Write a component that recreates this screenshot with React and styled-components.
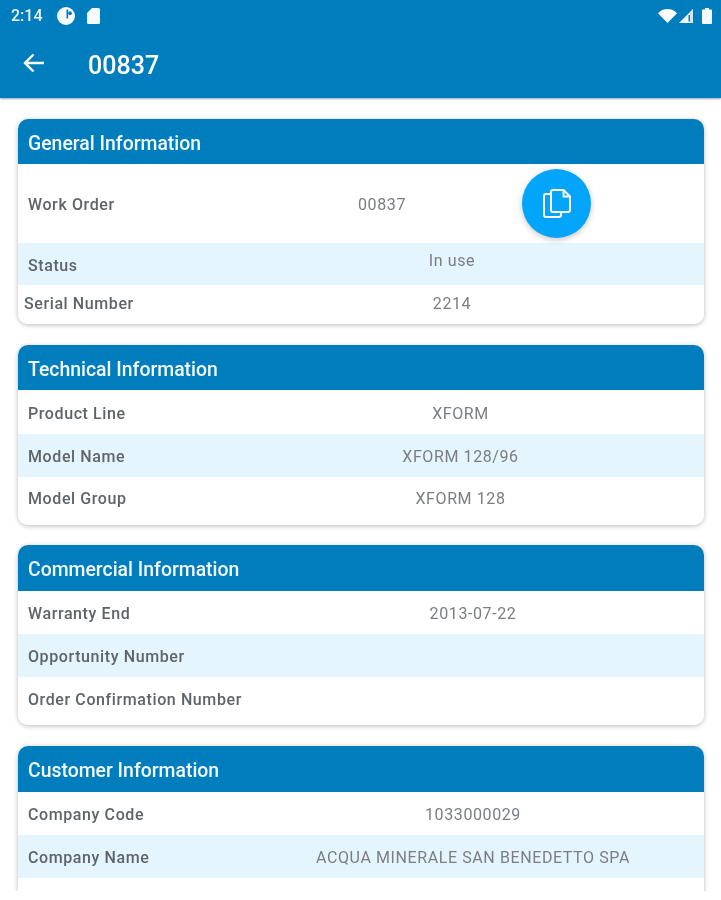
import React from "react";
import styled, { createGlobalStyle } from "styled-components";

const Global = createGlobalStyle`
  html, body { margin: 0; padding: 0; background: #fff; }
  body { font-family: Roboto, "Liberation Sans", sans-serif; }
`;

const Screen = styled.div`
  width: 721px;
  height: 891px;
  overflow: hidden;
  background: #fff;
  filter: blur(0.35px);
`;

const AppBar = styled.header`
  height: 98px;
  background: #007dbd;
  color: #fff;
  box-shadow: 0 1px 2px rgba(0, 60, 110, 0.45);
  position: relative;
  display: flex;
  flex-direction: column;
`;

const StatusBar = styled.div`
  height: 31px;
  padding: 0 9px 0 11px;
  display: flex;
  align-items: center;
  gap: 12px;
`;

const Time = styled.span`
  font-size: 16px;
  font-weight: 500;
  color: #eef6fb;
  margin-right: 2px;
`;

const StatusRight = styled.div`
  margin-left: auto;
  display: flex;
  align-items: center;
  gap: 2px;
`;

const BatterySlot = styled.span`
  display: flex;
  margin-left: 7px;
`;

const TitleRow = styled.div`
  flex: 1;
  display: flex;
  align-items: center;
  padding: 0 0 4px 22px;
  gap: 42px;
`;

const Title = styled.h1`
  margin: 6px 0 0;
  font-size: 25px;
  font-weight: 500;
  line-height: 1;
  letter-spacing: 0.05px;
`;

const Content = styled.main`
  padding: 21px 17px 0 18px;
  display: flex;
  flex-direction: column;
  gap: 20.6px;
`;

const Card = styled.section`
  border-radius: 10px;
  background: #fff;
  box-shadow: 0 1px 5px rgba(0, 0, 0, 0.28);
  overflow: hidden;
  flex-shrink: 0;
`;

const CardHead = styled.h2`
  margin: 0;
  height: ${(p) => p.$h}px;
  padding: ${(p) => p.$pt}px 10px 0;
  box-sizing: border-box;
  display: flex;
  align-items: center;
  background: #007dbd;
  color: #f2f9fd;
  font-size: 19.4px;
  font-weight: 500;
`;

const Row = styled.div`
  position: relative;
  display: flex;
  align-items: center;
  box-sizing: border-box;
  height: ${(p) => p.$h}px;
  padding-top: ${(p) => p.$pt ?? 2}px;
  padding-bottom: ${(p) => p.$pb ?? 0}px;
  background: ${(p) => (p.$striped ? "#e5f5fe" : "#fff")};
`;

const Label = styled.div`
  width: ${(p) => p.$w}px;
  flex-shrink: 0;
  padding-left: ${(p) => p.$pad ?? 10}px;
  box-sizing: border-box;
  font-size: 16px;
  font-weight: 500;
  letter-spacing: 0.6px;
  color: #5e6468;
  white-space: nowrap;
`;

const Value = styled.div`
  flex: 1;
  text-align: center;
  font-size: 16px;
  letter-spacing: 0.6px;
  color: #7a7e82;
  padding-right: ${(p) => p.$pr ?? 0}px;
  margin-top: ${(p) => p.$up ?? 0}px;
`;

const Fab = styled.button`
  position: absolute;
  left: 504px;
  top: 5px;
  width: 69px;
  height: 69px;
  padding: 0;
  border: 0;
  border-radius: 50%;
  background: #03a5fb;
  box-shadow: 0 2px 6px rgba(0, 0, 0, 0.22);
  display: flex;
  align-items: center;
  justify-content: center;
  z-index: 1;
`;

const BackArrow = () => (
  <svg width="24" height="24" viewBox="0 0 24 24" fill="none" stroke="#fff" strokeWidth="2.4">
    <path d="M22 12H3M11.500 3.500L3 12l8.500 8.500" />
  </svg>
);

const DataUsage = () => (
  <svg width="18" height="18" viewBox="0 0 18 18">
    <circle cx="9" cy="9" r="9" fill="#f4fafd" />
    <rect x="9.500" y="2.500" width="1.600" height="9" fill="#007dbd" />
    <circle cx="13" cy="6.200" r="1.900" fill="#007dbd" />
  </svg>
);

const SdCard = () => (
  <svg width="13" height="16" viewBox="0 0 13 16">
    <path d="M5 0h6.500A1.500 1.500 0 0 1 13 1.500v13a1.500 1.500 0 0 1-1.500 1.500h-10A1.500 1.500 0 0 1 0 14.500V5z" fill="#f4fafd" />
  </svg>
);

const Wifi = () => (
  <svg width="19" height="14" viewBox="0 0 19 14">
    <path d="M0 4.200C2.400 1.600 5.800 0 9.500 0s7.100 1.600 9.500 4.200L9.500 14z" fill="#fff" />
  </svg>
);

const Signal = () => (
  <svg width="14" height="14" viewBox="0 0 14 14">
    <path d="M14 0v14H0z" fill="#f4fafd" />
    <rect x="9.500" y="6" width="1.500" height="6.500" fill="#007dbd" />
    <path d="M11 4v10h3V0.500z" fill="#cfe6f3" />
  </svg>
);

const Battery = () => (
  <svg width="10" height="16" viewBox="0 0 10 16">
    <path d="M3 0h4v1.500h2a1 1 0 0 1 1 1V15a1 1 0 0 1-1 1H1a1 1 0 0 1-1-1V2.500a1 1 0 0 1 1-1h2z" fill="#f4fafd" />
  </svg>
);

const CopyIcon = () => (
  <svg width="28" height="29" viewBox="0 0 28 29" fill="none" stroke="#fff" strokeWidth="2" strokeLinejoin="round">
    <path d="M10 1h10.500L27 7.500V21a2 2 0 0 1-2 2H10a2 2 0 0 1-2-2V3a2 2 0 0 1 2-2z" />
    <path d="M20.500 1v6.500H27" />
    <path d="M8 5H3a2 2 0 0 0-2 2v19a2 2 0 0 0 2 2h13a2 2 0 0 0 2-2v-3" />
  </svg>
);

const cards = [
  {
    title: "General Information",
    headH: 45,
    headPt: 4,
    labelW: 182,
    rows: [
      { h: 79, label: "Work Order", value: "00837", pr: 140, fab: true },
      { h: 42, label: "Status", value: "In use", striped: true, up: -10 },
      { h: 39, label: "Serial Number", value: "2214", pad: 6, pt: 0, pb: 2 },
    ],
  },
  {
    title: "Technical Information",
    headH: 45,
    headPt: 4,
    labelW: 199,
    rows: [
      { h: 44, label: "Product Line", value: "XFORM", pt: 4 },
      { h: 43, label: "Model Name", value: "XFORM 128/96", striped: true },
      { h: 48, label: "Model Group", value: "XFORM 128", pt: 0, pb: 4 },
    ],
  },
  {
    title: "Commercial Information",
    headH: 46,
    headPt: 2,
    labelW: 224,
    rows: [
      { h: 43, label: "Warranty End", value: "2013-07-22" },
      { h: 43, label: "Opportunity Number", value: "", striped: true },
      { h: 48, label: "Order Confirmation Number", value: "", pt: 0, pb: 4 },
    ],
  },
  {
    title: "Customer Information",
    headH: 46,
    headPt: 4,
    labelW: 224,
    rows: [
      { h: 43, label: "Company Code", value: "1033000029" },
      { h: 43, label: "Company Name", value: "ACQUA MINERALE SAN BENEDETTO SPA", striped: true },
      { h: 48, label: "", value: "" },
    ],
  },
];

export default function App() {
  return (
    <Screen>
      <Global />
      <AppBar>
        <StatusBar>
          <Time>2:14</Time>
          <DataUsage />
          <SdCard />
          <StatusRight>
            <Wifi />
            <Signal />
            <BatterySlot>
              <Battery />
            </BatterySlot>
          </StatusRight>
        </StatusBar>
        <TitleRow>
          <BackArrow />
          <Title>00837</Title>
        </TitleRow>
      </AppBar>
      <Content>
        {cards.map((c) => (
          <Card key={c.title}>
            <CardHead $h={c.headH} $pt={c.headPt}>{c.title}</CardHead>
            {c.rows.map((r, i) => (
              <Row key={i} $h={r.h} $striped={r.striped} $pt={r.pt} $pb={r.pb}>
                <Label $w={c.labelW} $pad={r.pad}>{r.label}</Label>
                <Value $pr={r.pr} $up={r.up}>{r.value}</Value>
                {r.fab && (
                  <Fab aria-label="Copy">
                    <CopyIcon />
                  </Fab>
                )}
              </Row>
            ))}
          </Card>
        ))}
      </Content>
    </Screen>
  );
}
